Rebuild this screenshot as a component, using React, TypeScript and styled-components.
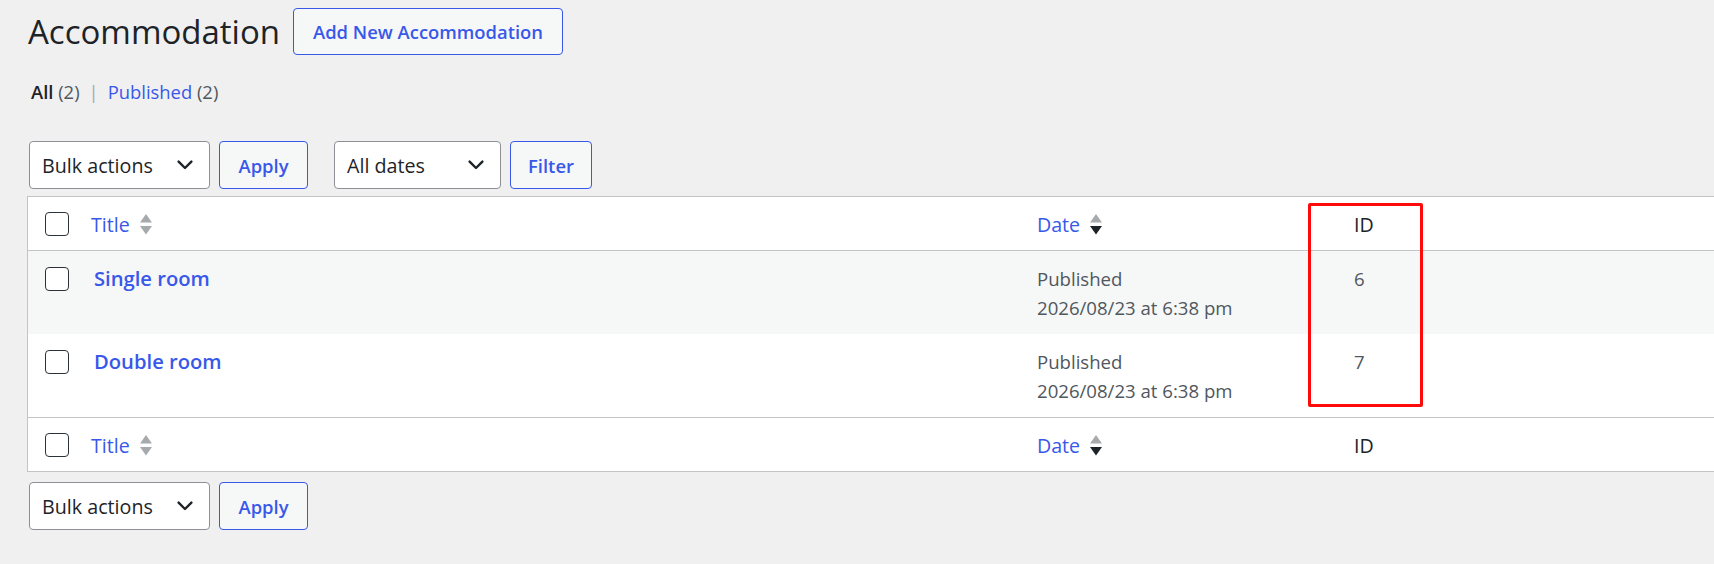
import styled, { createGlobalStyle } from "styled-components";

const colors = {
  page: "#f0f0f1",
  text: "#1d2327",
  muted: "#50575e",
  link: "#3858e9",
  border: "#c3c4c7",
  inputBorder: "#8c8f94",
  stripe: "#f6f7f7",
  arrow: "#a7aaad",
  highlight: "#ff0a0a",
};

const fonts = {
  main: `"Open Sans", "Noto Sans", "DejaVu Sans", sans-serif`,
};

const GlobalStyle = createGlobalStyle`
  * {
    box-sizing: border-box;
  }

  body {
    margin: 0;
    background: ${colors.page};
    color: ${colors.text};
    font-family: ${fonts.main};
    overflow: hidden;
  }
`;

const Page = styled.div`
  padding: 8px 0 0 27px;
  min-height: 564px;
  overflow: hidden;
`;

const Header = styled.div`
  display: flex;
  align-items: center;
  gap: 13px;
  height: 47px;
`;

const PageTitle = styled.h1`
  margin: 0;
  padding-left: 1px;
  font-size: 33px;
  font-weight: 400;
  line-height: 47px;
  color: ${colors.text};
`;

const OutlineButton = styled.button<{ $width: number; $height?: number }>`
  width: ${({ $width }) => $width}px;
  height: ${({ $height }) => $height ?? 48}px;
  padding: 0;
  border: 1px solid ${colors.link};
  border-radius: 4px;
  background: ${colors.stripe};
  color: ${colors.link};
  font-family: ${fonts.main};
  font-size: 18.4px;
  font-weight: 600;
  text-align: center;
  white-space: nowrap;
  cursor: pointer;
`;

const ViewLinks = styled.ul`
  display: flex;
  align-items: baseline;
  margin: 23px 0 0;
  padding: 0 0 0 4px;
  list-style: none;
  font-size: 18.4px;
  line-height: 27px;
  color: ${colors.muted};
`;

const ViewLink = styled.li`
  white-space: pre;

  b {
    font-weight: 600;
    color: ${colors.text};
  }

  a {
    color: ${colors.link};
    text-decoration: none;
  }
`;

const Separator = styled.span`
  margin: 0 9px;
  color: ${colors.arrow};
`;

const Tablenav = styled.div<{ $top: number }>`
  display: flex;
  align-items: center;
  gap: 26px;
  height: 48px;
  margin-top: ${({ $top }) => $top}px;
  padding-left: 2px;
`;

const ActionGroup = styled.div`
  display: flex;
  align-items: center;
  gap: 9px;
`;

const SelectBox = styled.div<{ $width: number }>`
  display: flex;
  align-items: center;
  justify-content: space-between;
  width: ${({ $width }) => $width}px;
  height: 48px;
  padding: 0 16px 0 12px;
  border: 1px solid ${colors.inputBorder};
  border-radius: 4px;
  background: #fff;
  font-size: 19.7px;
  color: ${colors.text};
`;

const ListTable = styled.div`
  position: relative;
  width: calc(100% + 40px);
  margin-top: 7px;
  border: 1px solid ${colors.border};
  background: #fff;
`;

const Row = styled.div<{ $kind: "head" | "foot" | "body"; $striped?: boolean }>`
  display: grid;
  grid-template-columns: 53px 946px 317px 1fr;
  align-items: ${({ $kind }) => ($kind === "body" ? "start" : "center")};
  height: ${({ $kind }) => ($kind === "body" ? 83 : 54)}px;
  background: ${({ $striped }) => ($striped ? colors.stripe : "#fff")};
  border-bottom: ${({ $kind }) =>
    $kind === "head" ? `1px solid ${colors.border}` : "none"};
  border-top: ${({ $kind }) =>
    $kind === "foot" ? `1px solid ${colors.border}` : "none"};
`;

const CheckCell = styled.div<{ $body?: boolean }>`
  display: flex;
  padding: ${({ $body }) => ($body ? "16px 0 0 17px" : "0 0 0 17px")};
`;

const Checkbox = styled.span`
  display: block;
  width: 24px;
  height: 24px;
  border: 1.5px solid #2c3338;
  border-radius: 4px;
  background: #fff;
`;

const HeadCell = styled.div<{ $sortable?: boolean }>`
  display: flex;
  align-items: center;
  gap: 10px;
  padding: 2px 10px 0;
  font-size: 19.6px;
  color: ${({ $sortable }) => ($sortable ? colors.link : colors.text)};
`;

const BodyCell = styled.div<{ $indent?: number }>`
  padding: 14px 10px 0 ${({ $indent }) => $indent ?? 10}px;
  font-size: 18.6px;
  line-height: 28.5px;
  color: ${colors.muted};
`;

const RowTitle = styled.a`
  display: block;
  font-size: 20.2px;
  font-weight: 600;
  line-height: 27px;
  color: ${colors.link};
  text-decoration: none;
`;

const Highlight = styled.div`
  position: absolute;
  top: 6px;
  left: 1280px;
  width: 115px;
  height: 204px;
  border: 3px solid ${colors.highlight};
  border-radius: 2px;
  pointer-events: none;
`;

const Chevron = () => (
  <svg width="16" height="10" viewBox="0 0 16 10" aria-hidden>
    <path
      d="M1.6 1.6 L8 8 L14.4 1.6"
      fill="none"
      stroke={colors.text}
      strokeWidth="2.4"
      strokeLinecap="round"
      strokeLinejoin="round"
    />
  </svg>
);

const SortArrows = ({ down = colors.arrow }: { down?: string }) => (
  <svg width="12" height="21" viewBox="0 0 12 21" aria-hidden>
    <path d="M6 0 L12 8.5 L0 8.5 Z" fill={colors.arrow} />
    <path d="M0 12 L12 12 L6 20.5 Z" fill={down} />
  </svg>
);

type Accommodation = { id: number; title: string; date: string };

const rooms: Accommodation[] = [
  { id: 6, title: "Single room", date: "2026/08/23 at 6:38 pm" },
  { id: 7, title: "Double room", date: "2026/08/23 at 6:38 pm" },
];

const ColumnHeaders = ({ kind }: { kind: "head" | "foot" }) => (
  <Row $kind={kind}>
    <CheckCell>
      <Checkbox />
    </CheckCell>
    <HeadCell $sortable>
      Title
      <SortArrows />
    </HeadCell>
    <HeadCell $sortable>
      Date
      <SortArrows down={colors.text} />
    </HeadCell>
    <HeadCell>ID</HeadCell>
  </Row>
);

const BulkActions = () => (
  <ActionGroup>
    <SelectBox $width={181}>
      Bulk actions
      <Chevron />
    </SelectBox>
    <OutlineButton $width={89}>Apply</OutlineButton>
  </ActionGroup>
);

const App = () => {
  return (
    <Page>
      <GlobalStyle />
      <Header>
        <PageTitle>Accommodation</PageTitle>
        <OutlineButton $width={270} $height={47}>
          Add New Accommodation
        </OutlineButton>
      </Header>

      <ViewLinks>
        <ViewLink>
          <b>All</b> (2)
        </ViewLink>
        <Separator>|</Separator>
        <ViewLink>
          <a href="#published">Published</a> (2)
        </ViewLink>
      </ViewLinks>

      <Tablenav $top={36}>
        <BulkActions />
        <ActionGroup>
          <SelectBox $width={167}>
            All dates
            <Chevron />
          </SelectBox>
          <OutlineButton $width={82}>Filter</OutlineButton>
        </ActionGroup>
      </Tablenav>

      <ListTable>
        <ColumnHeaders kind="head" />
        {rooms.map((room, index) => (
          <Row key={room.id} $kind="body" $striped={index % 2 === 0}>
            <CheckCell $body>
              <Checkbox />
            </CheckCell>
            <BodyCell $indent={13}>
              <RowTitle href={`#post-${room.id}`}>{room.title}</RowTitle>
            </BodyCell>
            <BodyCell>
              Published
              <br />
              {room.date}
            </BodyCell>
            <BodyCell>{room.id}</BodyCell>
          </Row>
        ))}
        <ColumnHeaders kind="foot" />
        <Highlight />
      </ListTable>

      <Tablenav $top={10}>
        <BulkActions />
      </Tablenav>
    </Page>
  );
};

export default App;
